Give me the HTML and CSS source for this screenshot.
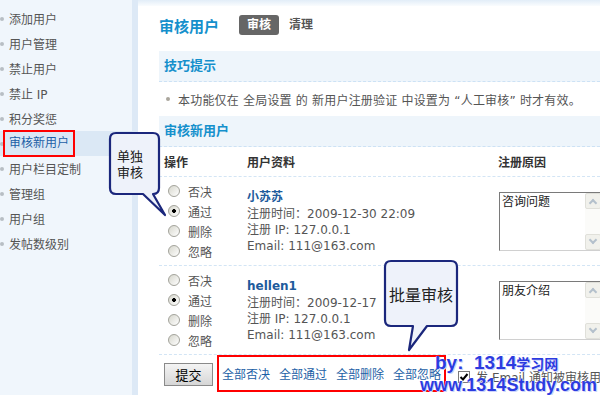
FILE: index.html
```html
<!DOCTYPE html>
<html lang="zh-CN">
<head>
    <meta charset="UTF-8">
    <title>审核用户</title>
    <link rel="stylesheet" href="styles.css">
</head>
<body>
<div class="page">
    <div class="side">
        <ul class="menu">
            <li><i class="dot"></i>添加用户</li>
            <li><i class="dot"></i>用户管理</li>
            <li><i class="dot"></i>禁止用户</li>
            <li><i class="dot"></i>禁止 IP</li>
            <li><i class="dot"></i>积分奖惩</li>
            <li class="on"><i class="dot"></i><span class="mark">审核新用户</span></li>
            <li><i class="dot"></i>用户栏目定制</li>
            <li><i class="dot"></i>管理组</li>
            <li><i class="dot"></i>用户组</li>
            <li><i class="dot"></i>发帖数级别</li>
        </ul>
    </div>

    <div class="main">
        <div class="topbar"></div>
        <div class="content">
            <div class="heading">
                <h3>审核用户</h3>
                <ul class="tabs">
                    <li class="cur">审核</li>
                    <li>清理</li>
                </ul>
            </div>

            <div class="box">
                <div class="box-hd">技巧提示</div>
                <p class="tip"><i class="bullet"></i>本功能仅在 全局设置 的 新用户注册验证 中设置为 “人工审核” 时才有效。</p>
            </div>

            <div class="box">
                <div class="box-hd">审核新用户</div>
                <div class="row head">
                    <div>操作</div>
                    <div>用户资料</div>
                    <div>注册原因</div>
                </div>

                <div class="row">
                    <div class="ops">
                        <label><input type="radio" name="u1">否决</label>
                        <label><input type="radio" name="u1" checked>通过</label>
                        <label><input type="radio" name="u1">删除</label>
                        <label><input type="radio" name="u1">忽略</label>
                    </div>
                    <div class="info">
                        <a class="name" href="#">小苏苏</a>
                        <p>注册时间：2009-12-30 22:09</p>
                        <p>注册 IP: 127.0.0.1</p>
                        <p>Email: 111@163.com</p>
                    </div>
                    <div class="reason">
                        <div class="ta">
                            <span class="ta-text">咨询问题</span>
                            <span class="sb"><i class="up"></i><i class="down"></i></span>
                        </div>
                    </div>
                </div>

                <div class="row">
                    <div class="ops">
                        <label><input type="radio" name="u2">否决</label>
                        <label><input type="radio" name="u2" checked>通过</label>
                        <label><input type="radio" name="u2">删除</label>
                        <label><input type="radio" name="u2">忽略</label>
                    </div>
                    <div class="info">
                        <a class="name" href="#">hellen1</a>
                        <p>注册时间：2009-12-17</p>
                        <p>注册 IP: 127.0.0.1</p>
                        <p>Email: 111@163.com</p>
                    </div>
                    <div class="reason">
                        <div class="ta">
                            <span class="ta-text">朋友介绍</span>
                            <span class="sb"><i class="up"></i><i class="down"></i></span>
                        </div>
                    </div>
                </div>
            </div>

            <div class="foot">
                <button class="btn">提交</button>
                <div class="links">
                    <a href="#">全部否决</a>
                    <a href="#">全部通过</a>
                    <a href="#">全部删除</a>
                    <a href="#">全部忽略</a>
                </div>
                <label class="notify">
                    <span class="check"><svg width="10" height="10" viewBox="0 0 10 10"><path d="M1.5 5 L4 7.5 L8.5 2" fill="none" stroke="#000" stroke-width="2"/></svg></span>
                    发 Email 通知被审核用户
                </label>
            </div>
        </div>
    </div>

    <!-- 标注气泡 -->
    <div class="callout c1">
        <svg width="62" height="88" viewBox="0 0 62 88">
            <path d="M8 2 H45 Q51 2 51 8 V57 Q51 63 45 63 L57 84 L35 63 H8 Q2 63 2 57 V8 Q2 2 8 2 Z" fill="#eef2fa" stroke="#1b277c" stroke-width="2.2" stroke-linejoin="round"/>
        </svg>
        <span class="c-text">单独<br>审核</span>
    </div>

    <div class="callout c2">
        <svg width="78" height="94" viewBox="0 0 78 94">
            <path d="M8 2 H68 Q74 2 74 8 V61 Q74 67 68 67 H44 L26 91 L30 67 H8 Q2 67 2 61 V8 Q2 2 8 2 Z" fill="#eef2fa" stroke="#1b277c" stroke-width="2.2" stroke-linejoin="round"/>
        </svg>
        <span class="c-text">批量审核</span>
    </div>

    <div class="wm">
        <div class="l1">by:&nbsp; 1314<span class="cjk">学习网</span></div>
        <div class="l2">www.1314Study.com</div>
    </div>
</div>
</body>
</html>
```

FILE: styles.css
```css
body {
    margin: 0;
    font-family: "DejaVu Sans", "Noto Sans CJK SC", sans-serif;
    font-size: 12px;
    color: #555;
}
.page {
    position: relative;
    display: flex;
    width: 600px;
    height: 395px;
    overflow: hidden;
    background: #fff;
}

/* 左侧菜单 */
.side {
    width: 132px;
    flex: none;
    background: #f0f6fc;
    border-right: 6px solid #dde9f6;
}
.menu {
    list-style: none;
    margin: 0;
    padding: 6px 0 0;
}
.menu li {
    display: flex;
    align-items: center;
    height: 25px;
    color: #555;
    white-space: nowrap;
}
.dot {
    width: 4px;
    height: 4px;
    border-radius: 50%;
    background: #b8bec4;
    margin-right: 5px;
}
.menu li.on {
    background: #dbe8f5;
    color: #1c5fa6;
}
.mark {
    display: inline-block;
    line-height: 23px;
    padding: 0 4px;
    border: 2px solid #f00;
    margin: -1px 0 -1px -6px;
}

/* 主区域 */
.main {
    flex: 1;
    min-width: 0;
}
.topbar {
    height: 6px;
    background: linear-gradient(#e2edf8, #fafcfe);
}
.content {
    padding-left: 21px;
}
.heading {
    display: flex;
    align-items: center;
    height: 20px;
    padding: 9px 0 16px;
}
.heading h3 {
    margin: 0 20px 0 0;
    font-size: 15px;
    color: #1590cc;
}
.tabs {
    display: flex;
    list-style: none;
    margin: 0;
    padding: 0;
}
.tabs li {
    height: 20px;
    line-height: 20px;
    padding: 0 8px;
    margin-right: 2px;
    font-weight: bold;
    color: #555;
    border-radius: 3px;
}
.tabs li.cur {
    background: #666;
    color: #fff;
}

.box-hd {
    height: 30px;
    line-height: 30px;
    padding-left: 5px;
    background: #eef5fb;
    border-bottom: 1px dashed #cde2f5;
    font-size: 13px;
    font-weight: bold;
    color: #1590cc;
}
.tip {
    display: flex;
    align-items: center;
    height: 34px;
    margin: 0;
    padding-left: 7px;
    white-space: nowrap;
    letter-spacing: 0.2px;
}
.bullet {
    flex: none;
    width: 4px;
    height: 4px;
    border-radius: 50%;
    background: #aaa69c;
    margin-right: 8px;
}

.row {
    display: grid;
    grid-template-columns: 83px 251px 1fr;
    padding: 4px 0;
    border-bottom: 1px dashed #d3e5f5;
}
.row > div {
    padding-left: 5px;
    white-space: nowrap;
}
.row.head {
    height: 29px;
    padding: 0;
    align-items: center;
    font-weight: bold;
    color: #333;
}
.row > .ops {
    padding-left: 9px;
}
.ops label {
    display: flex;
    align-items: center;
    gap: 8px;
    height: 20px;
}
.ops input {
    appearance: none;
    flex: none;
    width: 12px;
    height: 12px;
    margin: 0;
    border: 1px solid #a3a39b;
    border-radius: 50%;
    background: linear-gradient(135deg, #d6d6cc, #fff);
}
.ops input:checked {
    background: radial-gradient(circle, #000 0 1.6px, transparent 2.2px), linear-gradient(135deg, #d6d6cc, #fff);
}
.info {
    align-self: center;
}
.name {
    display: block;
    line-height: 18px;
    font-weight: bold;
    color: #1d5b9c;
    text-decoration: none;
}
.info p {
    margin: 0;
    line-height: 16px;
}
.row > .reason {
    padding: 11px 0 0 6px;
}
.ta {
    display: flex;
    width: 103px;
    height: 59px;
    box-sizing: border-box;
    border: 1px solid;
    border-color: #7a7a7a #d0d0d0 #d0d0d0 #7a7a7a;
    background: #fff;
}
.ta-text {
    flex: 1;
    padding: 1px 2px;
    line-height: 16px;
    color: #222;
}
.sb {
    flex: none;
    width: 16px;
    display: flex;
    flex-direction: column;
    justify-content: space-between;
    background: #fbfbf9;
}
.sb i {
    height: 16px;
    box-sizing: border-box;
    display: flex;
    align-items: center;
    justify-content: center;
    background: #f1f1ec;
    border: 1px solid #e0e0da;
    border-radius: 2px;
}
.sb i::after {
    content: "";
    width: 4px;
    height: 4px;
    border-left: 2px solid #b4c0cc;
    border-top: 2px solid #b4c0cc;
}
.sb .up::after {
    transform: translateY(2px) rotate(45deg);
}
.sb .down::after {
    transform: translateY(-2px) rotate(-135deg);
}

/* 底部操作 */
.foot {
    display: flex;
    align-items: flex-start;
    padding-left: 5px;
    white-space: nowrap;
}
.foot > * {
    flex: none;
}
.btn {
    margin-top: 8px;
    width: 49px;
    height: 23px;
    padding: 0;
    border: 1px solid #8a8a8a;
    background: linear-gradient(#f4f4f4, #d6d6d6);
    font-family: inherit;
    font-size: 13px;
    color: #000;
}
.links {
    display: flex;
    align-items: center;
    gap: 9px;
    height: 37px;
    box-sizing: border-box;
    margin-left: 4px;
    padding: 0 3px;
    border: 2px solid #f00;
}
.links a {
    color: #1c5fa6;
    text-decoration: none;
}
.notify {
    display: flex;
    align-items: center;
    gap: 6px;
    margin: 13px 0 0 12px;
    color: #555;
}
.check {
    display: flex;
    width: 10px;
    height: 10px;
    border: 1px solid #7a7a7a;
    background: #fff;
}

/* 标注 */
.callout {
    position: absolute;
    box-sizing: border-box;
    display: flex;
    align-items: center;
    justify-content: center;
}
.callout svg {
    position: absolute;
    left: 0;
    top: 0;
}
.c-text {
    position: relative;
    text-align: center;
    font-family: "Noto Sans CJK SC", sans-serif;
    color: #222;
}
.c1 {
    left: 108px;
    top: 131px;
    width: 62px;
    height: 88px;
    padding: 2px 20px 25px 2px;
}
.c1 .c-text {
    font-size: 13px;
    line-height: 16px;
}
.c2 {
    left: 383px;
    top: 259px;
    width: 78px;
    height: 94px;
    padding: 2px 4px 27px 2px;
}
.c2 .c-text {
    font-size: 16px;
}

.wm {
    position: absolute;
    left: 420px;
    top: 352px;
    font-family: "Liberation Sans", "Noto Sans CJK SC", sans-serif;
    font-weight: bold;
    line-height: 21px;
    color: #2c3be0;
    white-space: nowrap;
    text-shadow: 0 0 1px #fff, 1px 1px 0 #c9d0fb;
}
.wm .l1 {
    padding-left: 15px;
    font-size: 19px;
}
.wm .cjk {
    font-size: 14px;
}
.wm .l2 {
    font-size: 18px;
}
```
